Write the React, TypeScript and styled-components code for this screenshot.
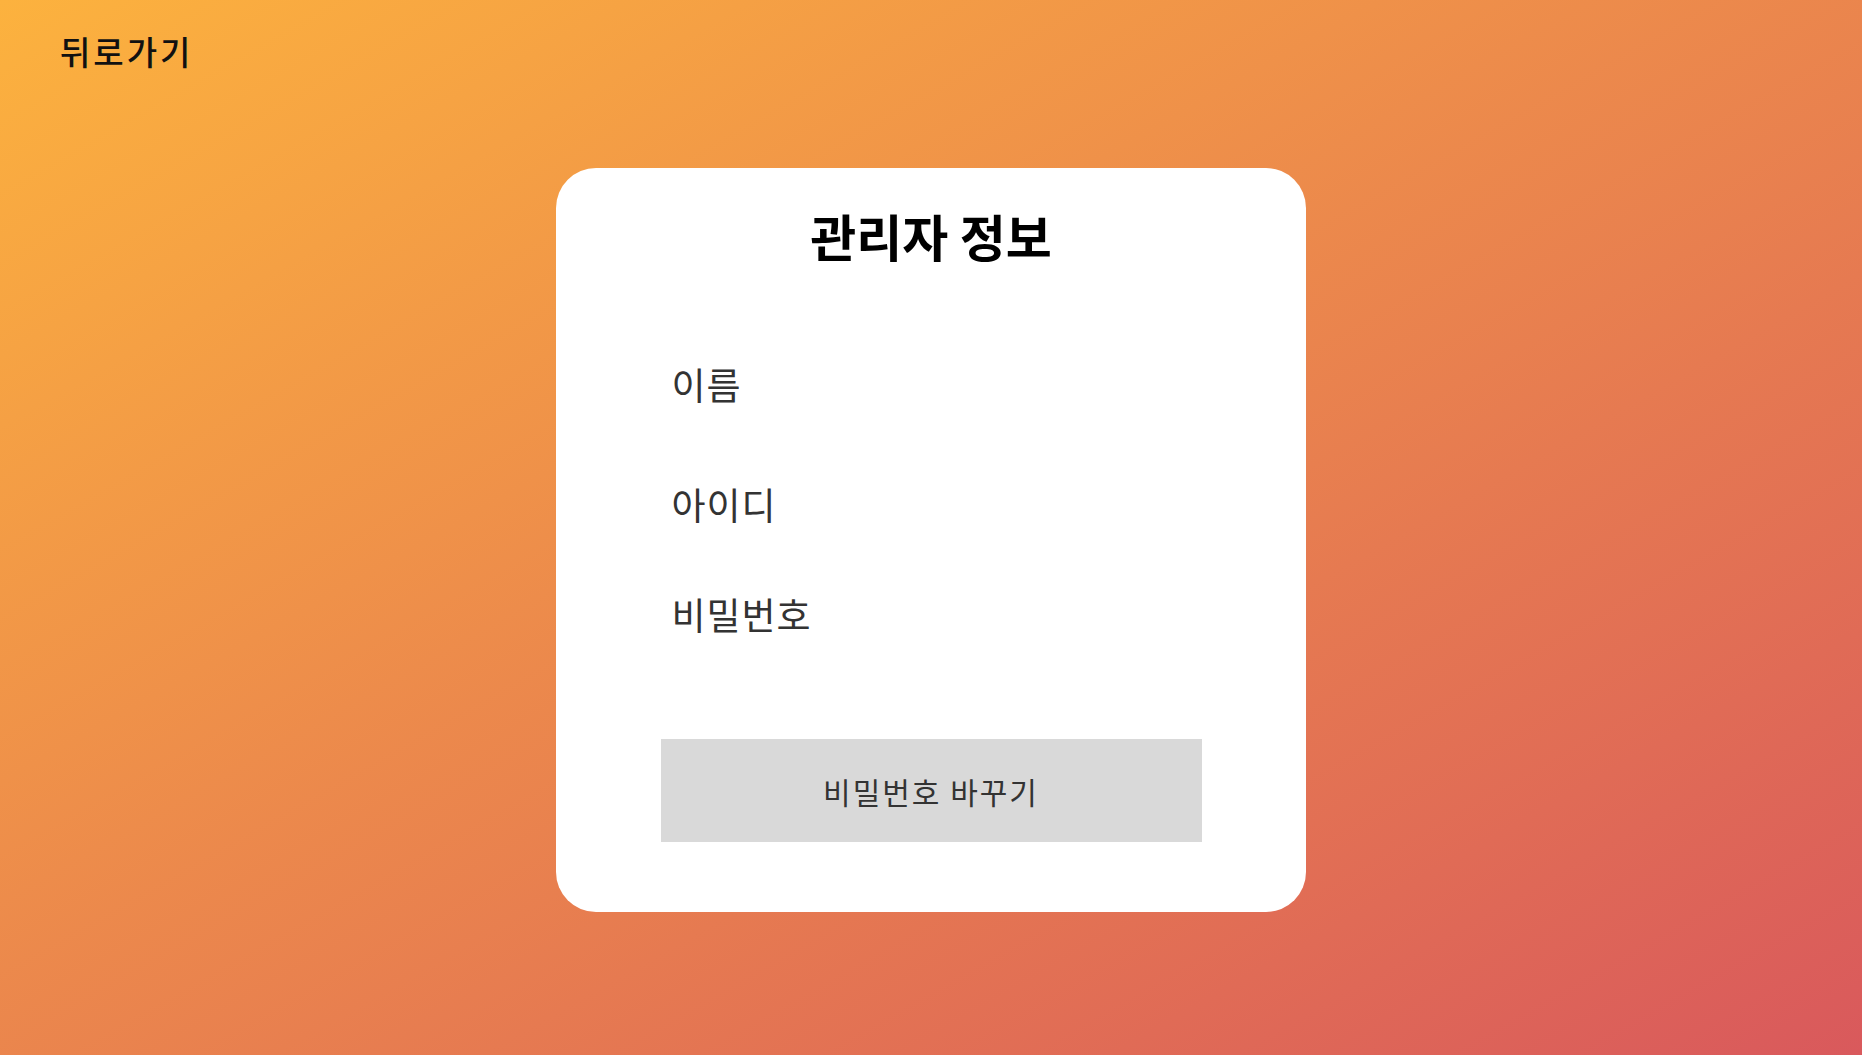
import React from "react";
import styled, { createGlobalStyle } from "styled-components";

const GlobalStyle = createGlobalStyle`
  html, body {
    margin: 0;
    padding: 0;
  }
  body {
    font-family: "Noto Sans CJK KR", "Noto Sans", sans-serif;
  }
  * { box-sizing: border-box; }
`;

const Page = styled.div`
  width: 100%;
  min-height: 100vh;
  background: linear-gradient(to bottom right, #fcb23e, #d9595c);
  display: flex;
  flex-direction: column;
`;

const Header = styled.header`
  padding: 28px 0 0 60px;
  height: 168px;
`;

const BackLink = styled.a`
  font-size: 33px;
  font-weight: 500;
  letter-spacing: 3px;
  line-height: 1.45;
  color: #111;
  text-decoration: none;
  cursor: pointer;
`;

const Card = styled.section`
  align-self: center;
  width: 750px;
  height: 744px;
  background: #fff;
  border-radius: 40px;
  display: flex;
  flex-direction: column;
  align-items: center;
  padding-top: 31px;
`;

const Title = styled.h1`
  margin: 0;
  text-align: center;
  font-size: 50px;
  font-weight: 700;
  line-height: 1.45;
  color: #000;
`;

const Fields = styled.div`
  width: 541px;
  display: flex;
  flex-direction: column;
  padding-left: 11px;
  margin-top: 86px;
`;

const Label = styled.div<{ $space: number }>`
  margin-top: ${(p) => p.$space}px;
  font-size: 37px;
  letter-spacing: 1px;
  line-height: 1.45;
  color: #333;
`;

const Button = styled.button`
  margin-top: 98px;
  width: 541px;
  height: 103px;
  border: none;
  border-radius: 0;
  background: #d9d9d9;
  font-family: "Noto Sans CJK KR", "Noto Sans", sans-serif;
  font-size: 30px;
  letter-spacing: 2px;
  color: #333;
  cursor: pointer;
`;

export default function App() {
  return (
    <>
      <GlobalStyle />
      <Page>
        <Header>
          <BackLink>뒤로가기</BackLink>
        </Header>
        <Card>
          <Title>관리자 정보</Title>
          <Fields>
            <Label $space={0}>이름</Label>
            <Label $space={67}>아이디</Label>
            <Label $space={56}>비밀번호</Label>
          </Fields>
          <Button>비밀번호 바꾸기</Button>
        </Card>
      </Page>
    </>
  );
}
